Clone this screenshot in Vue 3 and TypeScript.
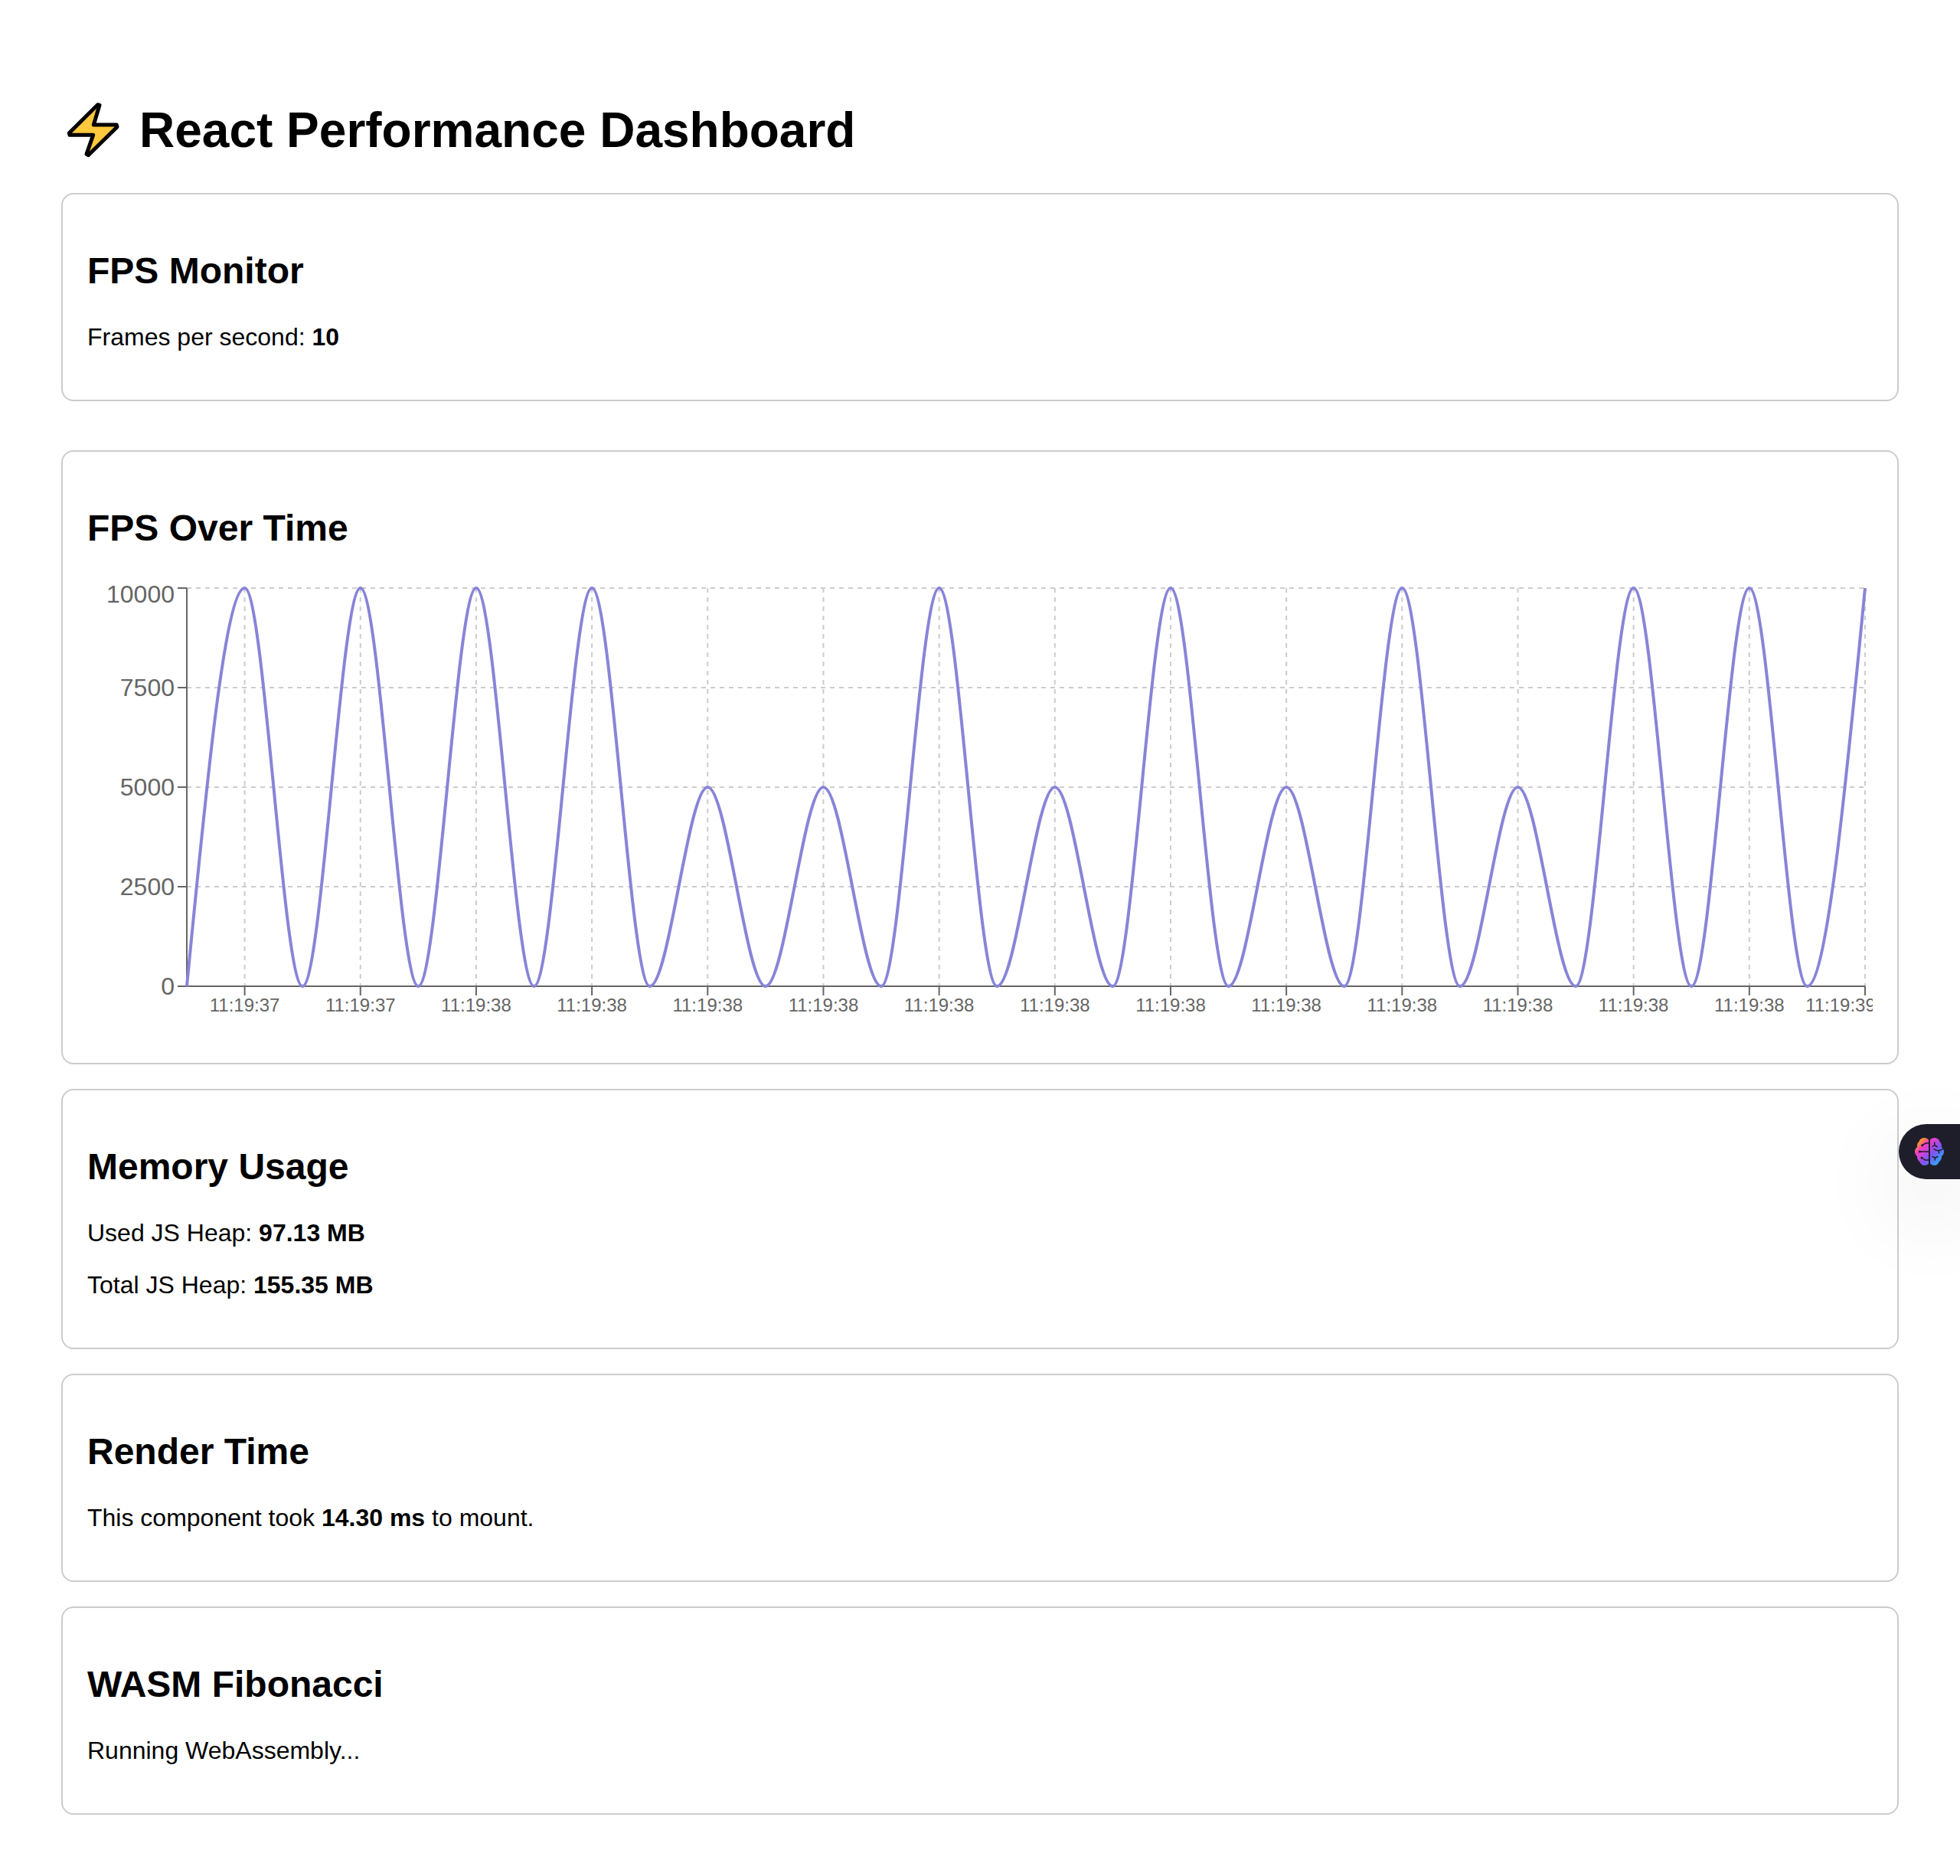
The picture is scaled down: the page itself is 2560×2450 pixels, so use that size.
<script setup lang="ts">
import { computed, onBeforeUnmount, onMounted, ref } from 'vue'

interface Sample {
  time: string
  fps: number
}

const peaks = [10000, 10000, 10000, 10000, 5000, 5000, 10000, 5000, 10000, 5000, 10000, 5000, 10000, 10000, 10000]
const times = peaks.map((_, i) => (i < 2 ? '11:19:37' : i < peaks.length - 1 ? '11:19:38' : '11:19:39'))
const samples: Sample[] = peaks.flatMap((fps, i) => [
  { time: times[i], fps: 0 },
  { time: times[i], fps },
])

const chartHeight = 598
const plotLeft = 130
const plotTop = 10
const plotHeight = 520
const plotBottom = plotTop + plotHeight
const maxFps = 10000

const chartBox = ref<HTMLElement | null>(null)
const chartWidth = ref(2332)
let observer: ResizeObserver | undefined

onMounted(() => {
  const box = chartBox.value
  if (!box) return
  chartWidth.value = box.clientWidth
  observer = new ResizeObserver(() => {
    chartWidth.value = box.clientWidth
  })
  observer.observe(box)
})
onBeforeUnmount(() => observer?.disconnect())

const plotRight = computed(() => chartWidth.value - 10)

const points = computed(() =>
  samples.map((s, i) => ({
    x: plotLeft + ((plotRight.value - plotLeft) * i) / (samples.length - 1),
    y: plotBottom - (s.fps / maxFps) * plotHeight,
    time: s.time,
  })),
)

// The last label is pulled inwards so that it stays near the chart's edge.
const xTicks = computed(() =>
  points.value
    .filter((_, i) => i % 2 === 1)
    .map((p) => ({ x: p.x, labelX: Math.min(p.x, chartWidth.value - 42), time: p.time })),
)

const yTicks = [0, 2500, 5000, 7500, 10000].map((value) => {
  const y = plotBottom - (value / maxFps) * plotHeight
  return { value, y, labelY: Math.max(y + 11, plotTop + 19) }
})

// Monotone cubic interpolation: every inner sample is an extremum, so its tangent is flat.
const linePath = computed(() => {
  const p = points.value
  const slope = (i: number) => (p[i + 1].y - p[i].y) / (p[i + 1].x - p[i].x)
  const last = p.length - 1
  const tangents = p.map((_, i) => {
    if (i === 0) return (3 * slope(0)) / 2
    if (i === last) return (3 * slope(last - 1)) / 2
    return 0
  })
  let d = `M${p[0].x},${p[0].y}`
  for (let i = 0; i < last; i++) {
    const dx = (p[i + 1].x - p[i].x) / 3
    d += `C${p[i].x + dx},${p[i].y + dx * tangents[i]},${p[i + 1].x - dx},${p[i + 1].y - dx * tangents[i + 1]},${p[i + 1].x},${p[i + 1].y}`
  }
  return d
})
</script>

<template>
  <main class="dashboard">
    <h1 class="title">
      <svg class="bolt" viewBox="0 9 252 258" aria-hidden="true">
        <path
          d="M143 50L150 52L127 129H217L219 137L106 248L99 244L125 169H33L31 161Z"
          fill="#ffc83d"
          stroke="#000"
          stroke-width="15"
          stroke-linejoin="round"
        />
      </svg>
      <span class="title-text">React Performance Dashboard</span>
    </h1>

    <section class="card">
      <h2>FPS Monitor</h2>
      <p>Frames per second: <strong>10</strong></p>
    </section>

    <section class="card chart-card">
      <h2>FPS Over Time</h2>
      <div ref="chartBox" class="chart">
        <svg class="chart-svg" :width="chartWidth" :height="chartHeight" role="img" aria-label="FPS over time">
          <g class="grid">
            <line v-for="t in yTicks" :key="t.value" :x1="plotLeft" :x2="plotRight" :y1="t.y" :y2="t.y" />
            <line v-for="(t, i) in xTicks" :key="i" :x1="t.x" :x2="t.x" :y1="plotTop" :y2="plotBottom" />
          </g>
          <g class="axis">
            <line :x1="plotLeft" :x2="plotRight" :y1="plotBottom" :y2="plotBottom" />
            <line :x1="plotLeft" :x2="plotLeft" :y1="plotTop" :y2="plotBottom" />
            <line v-for="(t, i) in xTicks" :key="i" :x1="t.x" :x2="t.x" :y1="plotBottom" :y2="plotBottom + 12" />
            <line v-for="t in yTicks" :key="t.value" :x1="plotLeft - 12" :x2="plotLeft" :y1="t.y" :y2="t.y" />
          </g>
          <g class="x-labels">
            <text v-for="(t, i) in xTicks" :key="i" :x="t.labelX" :y="plotBottom + 33">{{ t.time }}</text>
          </g>
          <g class="y-labels">
            <text v-for="t in yTicks" :key="t.value" :x="plotLeft - 16" :y="t.labelY">{{ t.value }}</text>
          </g>
          <path class="line" :d="linePath" />
        </svg>
      </div>
    </section>

    <section class="card">
      <h2>Memory Usage</h2>
      <p>Used JS Heap: <strong>97.13 MB</strong></p>
      <p>Total JS Heap: <strong>155.35 MB</strong></p>
    </section>

    <section class="card">
      <h2>Render Time</h2>
      <p>This component took <strong>14.30 ms</strong> to mount.</p>
    </section>

    <section class="card">
      <h2>WASM Fibonacci</h2>
      <p>Running WebAssembly...</p>
    </section>

    <button class="assistant" type="button" aria-label="Open assistant">
      <svg class="brain" viewBox="0 0 38 36" aria-hidden="true">
        <defs>
          <linearGradient id="brain-fill" x1="4" y1="3" x2="34" y2="33" gradientUnits="userSpaceOnUse">
            <stop offset="0" stop-color="#ffa51f" />
            <stop offset="0.1" stop-color="#fb8a3c" />
            <stop offset="0.25" stop-color="#f23cc0" />
            <stop offset="0.42" stop-color="#c646dc" />
            <stop offset="0.62" stop-color="#7d55f2" />
            <stop offset="0.82" stop-color="#4a86fa" />
            <stop offset="1" stop-color="#2fb0fa" />
          </linearGradient>
        </defs>
        <g fill="url(#brain-fill)">
          <path d="M18 2.5C17 1 15 0 12.500 0C8.500 0 6 2.500 5.500 5C3.500 6.500 2.500 9 3.200 12C1 13.500 0 15.500 0 18C0 20.500 1 22.500 3 24C2.800 27 4 29.500 6.200 31C7.500 34 9.500 36 12.500 36C15 36 17 35 18 33.500Z" />
          <path d="M20 2.500C21 1 23 0 25.500 0C29.500 0 32 2.500 32.500 5C34.500 6.500 35.500 9 34.800 12C37 13.500 38 15.500 38 18C38 20.500 37 22.500 35 24C35.200 27 34 29.500 31.800 31C30.500 34 28.500 36 25.500 36C23 36 21 35 20 33.500Z" />
        </g>
        <g fill="none" stroke="#1e1e2a" stroke-width="1.500" stroke-linecap="round">
          <path d="M18 7H14L9.700 9.700M18 18H6.300M18 29H13.500L9 26" />
          <path d="M25.700 6V9.500L23 11.500M25.700 9.500L29 11.500" />
          <path d="M25 14.500C28 17.500 33 17.500 38 13.500M31.500 17V20" />
          <path d="M26.300 29V26L23.200 24.500M26.300 26L30 24.500" />
        </g>
        <g fill="#1e1e2a">
          <circle cx="9.700" cy="9.700" r="1.500" />
          <circle cx="6.300" cy="18" r="1.500" />
          <circle cx="9" cy="26" r="1.500" />
        </g>
      </svg>
    </button>
  </main>
</template>

<style>
body {
  background: #fff;
}
</style>

<style scoped>
.dashboard {
  position: relative;
  padding: 80px;
  overflow: hidden;
  color: #000;
  font-family: 'Liberation Sans', Arial, sans-serif;
  font-size: 32px;
  line-height: 36px;
}

.title {
  display: flex;
  align-items: flex-end;
  gap: 18px;
  margin: 43px 0;
  font-size: 64px;
  font-weight: 700;
}

.title-text {
  line-height: 78px;
}

.bolt {
  flex: none;
  width: 84px;
  height: 86px;
}

.card {
  margin-bottom: 32px;
  padding: 32px;
  border: 2px solid #ccc;
  border-radius: 16px;
}

.card:last-of-type {
  margin-bottom: 0;
}

.chart-card {
  margin-top: 64px;
}

h2 {
  margin: 40px 0;
  font-size: 48px;
  font-weight: 700;
  line-height: 56px;
}

p {
  margin: 32px 0;
}

.chart {
  height: 598px;
  overflow: hidden;
}

.chart-svg {
  display: block;
}

.grid line {
  stroke: #ccc;
  stroke-width: 2;
  stroke-dasharray: 6 6;
}

.axis line {
  stroke: #666;
  stroke-width: 2;
}

.x-labels {
  fill: #666;
  font-size: 24px;
  text-anchor: middle;
}

.y-labels {
  fill: #666;
  font-size: 32px;
  text-anchor: end;
}

.line {
  fill: none;
  stroke: #8884d8;
  stroke-width: 4;
}

.assistant {
  position: absolute;
  top: 1468px;
  right: 0;
  display: flex;
  align-items: center;
  width: 80px;
  height: 72px;
  padding: 0 0 0 21px;
  border: 0;
  border-radius: 36px 0 0 36px;
  background: #1e1e2a;
  box-shadow: 0 40px 120px rgba(0, 0, 0, 0.12);
  cursor: pointer;
}

.brain {
  width: 38px;
  height: 36px;
}
</style>
